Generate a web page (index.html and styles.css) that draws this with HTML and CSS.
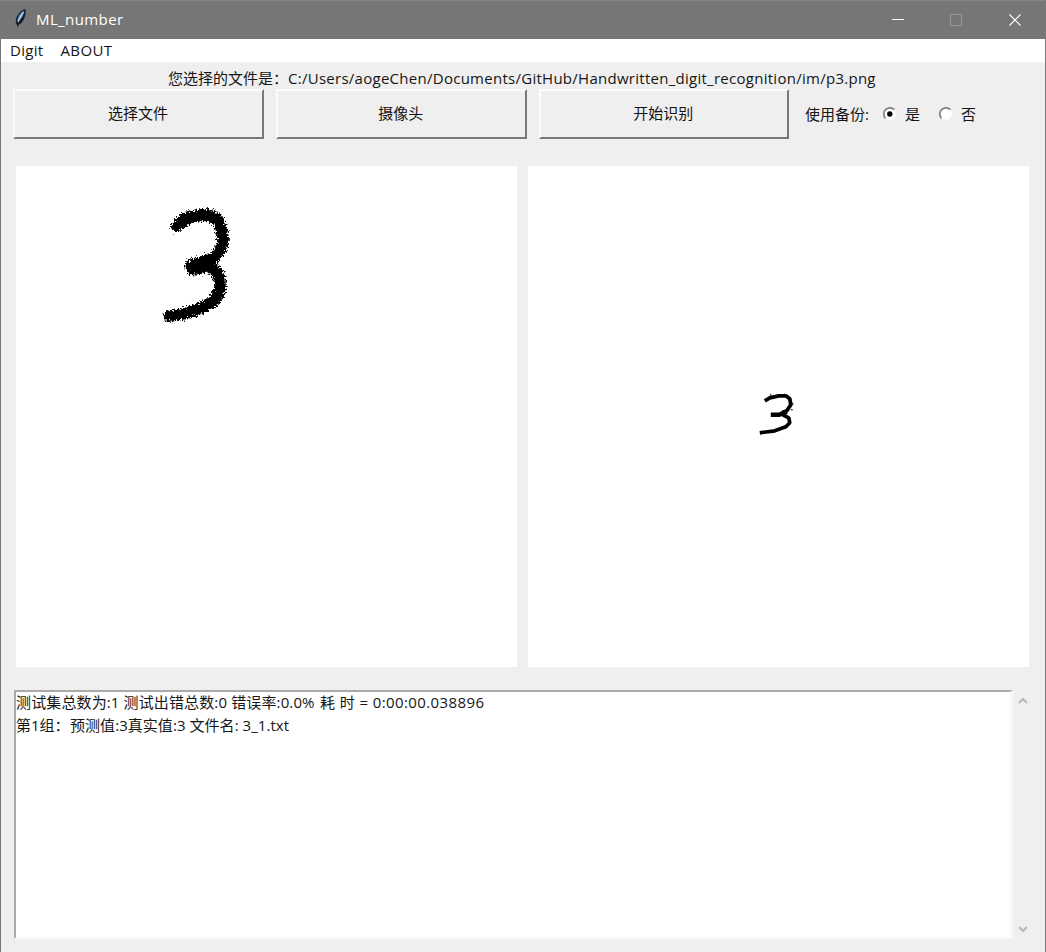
FILE: index.html
```
<!DOCTYPE html>
<html lang="zh-CN">
<head>
<meta charset="utf-8">
<title>ML_number</title>
<link rel="stylesheet" href="styles.css">
</head>
<body>
<div class="window">
  <header class="titlebar">
    <svg class="feather" width="14" height="22" viewBox="0 0 14 22">
      <path d="M11 1C7 2 3 7 2 11c-.6 3-.2 4 1 6l.5 3 1-3c4-2 6-6 6.700-10C12 4 12 2 11 1z" fill="#15202c"/>
      <path d="M10.500 2.500C7 4 3.500 8 3.300 13.500c3-1.500 5.500-4.500 6.300-7.500z" fill="#5f8fc4"/>
      <path d="M9.500 4C7 7 6 10 4 14" fill="none" stroke="#c3daf0" stroke-width="1.100"/>
    </svg>
    <span class="caption">ML_number</span>
    <svg class="controls" width="160" height="38" viewBox="0 0 160 38" fill="none">
      <path d="M6 18.500h12" stroke="#fff"/>
      <rect x="64.500" y="13.500" width="11" height="11" stroke="#999"/>
      <path d="M123.500 13.500l11 11m0-11l-11 11" stroke="#fff" stroke-width="1.200"/>
    </svg>
  </header>
  <nav class="menu"><span class="digit">Digit</span><span class="about">ABOUT</span></nav>
  <main class="content">
    <div class="path"><span class="prefix">您选择的文件是：</span><span class="file">C:/Users/aogeChen/Documents/GitHub/Handwritten_digit_recognition/im/p3.png</span></div>
    <div class="toolbar">
      <button class="btn">选择文件</button>
      <button class="btn">摄像头</button>
      <button class="btn">开始识别</button>
      <div class="backup">
        <span class="backup-label">使用备份:</span>
        <svg class="radio" width="14" height="14" viewBox="0 0 14 14"><circle cx="7" cy="7" r="6" fill="#fff"/><path d="M2.600 11.400A6 6 0 0 1 11.400 2.600" fill="none" stroke="#858585" stroke-width="1.700"/><circle cx="6.800" cy="7" r="2.700" fill="#000"/></svg>
        <span class="choice">是</span>
        <svg class="radio second" width="14" height="14" viewBox="0 0 14 14"><circle cx="7" cy="7" r="6" fill="#fff"/><path d="M2.600 11.400A6 6 0 0 1 11.400 2.600" fill="none" stroke="#858585" stroke-width="1.700"/></svg>
        <span class="choice">否</span>
      </div>
    </div>
    <div class="canvases">
      <svg class="canvas" width="501" height="501" viewBox="0 0 501 501">
        <defs><filter id="spray" x="-20%" y="-20%" width="140%" height="140%">
          <feTurbulence type="fractalNoise" baseFrequency=".6" numOctaves="2" seed="4"/>
          <feDisplacementMap in="SourceGraphic" scale="9" xChannelSelector="R" yChannelSelector="G"/>
        </filter></defs>
        <g filter="url(#spray)" fill="none" stroke="#000" stroke-linecap="round" stroke-linejoin="round">
          <path d="M161 60Q169 51 181 50Q196 46 203 57" stroke-width="12"/>
          <path d="M200 52Q213 74 202 87Q195 97 183 100" stroke-width="11.500"/>
          <path d="M178 101L192 97" stroke-width="17"/>
          <path d="M190 99Q205 104 204 120Q204 136 182 143Q170 149 153 150" stroke-width="11.500"/>
        </g>
      </svg>
      <svg class="canvas" width="501" height="501" viewBox="0 0 501 501">
        <g transform="translate(.8 .8)" fill="none" stroke="#000" stroke-linejoin="bevel">
          <path d="M236 234l5-3 9-2h7l4 3 1 6-4 6-5 2" stroke-width="3.800"/>
          <path d="M242 248h8l8-3" stroke-width="4.500"/>
          <path d="M254 248l6 3 1 5-4 4-11 4-15 2" stroke-width="3.700"/>
          <path d="M242 227v2M256 227v2M264 236v2M262 243h2" stroke-width="1"/>
        </g>
      </svg>
    </div>
    <div class="results">
      <div class="log">
        <div class="line"><span class="r1">测试集总数为:1 测试出错总数:0 错误率:0.0%</span><span class="r2">耗 时 = 0:00:00.038896</span></div>
        <div class="line"><span class="r3">第1组：</span><span class="r4">预测值:3真实值:3 文件名: 3_1.txt</span></div>
      </div>
      <div class="scroll">
        <svg width="12" height="9" viewBox="0 0 12 9"><path d="M2 7l4-4 4 4" fill="none" stroke="#b8b8b8" stroke-width="2.200"/></svg>
        <svg width="12" height="9" viewBox="0 0 12 9"><path d="M2 2l4 4 4-4" fill="none" stroke="#b8b8b8" stroke-width="2.200"/></svg>
      </div>
    </div>
  </main>
</div>
</body>
</html>
```
FILE: styles.css
```
* { box-sizing: border-box; }
body { margin: 0; font: 15px/20px "Open Sans", "Noto Sans CJK SC", sans-serif; color: #161616; }
.window { height: 952px; display: flex; flex-direction: column; background: #efefef; border: solid #777; border-width: 0 1px; overflow: hidden; white-space: nowrap; }
.titlebar { height: 39px; background: #767676; border-top: 1px solid #858585; display: flex; align-items: center; padding-left: 13px; color: #fff; }
.feather { margin-top: -3px; }
.caption { margin: -2px 0 0 8px; letter-spacing: .4px; }
.controls { margin-left: auto; margin-right: -1px; }
.menu { height: 23px; background: #fff; display: flex; align-items: center; padding: 0 0 1px 9px; gap: 17px; }
.digit { letter-spacing: .3px; }
.about { letter-spacing: .4px; }
.content { display: flex; flex-direction: column; }
.path { height: 27px; padding: 6px 0 0 167px; display: flex; }
.prefix { width: 120px; }
.file { letter-spacing: .27px; }
.toolbar { display: flex; padding-left: 12px; height: 50px; gap: 12px; }
.btn { width: 251px; height: 50px; padding: 0 1px 3px 0; background: #efefef; font: inherit; color: #111; border: solid; border-width: 2px; border-color: #fcfcfc #787878 #787878 #fcfcfc; }
.btn + .btn { width: 250.500px; }
.backup { display: flex; align-items: center; padding-left: 4px; }
.backup-label { width: 78px; }
.choice { margin-left: 8px; width: 15px; }
.second { margin-left: 19px; }
.canvases { display: flex; gap: 11px; padding: 27px 0 0 15px; }
.canvas { background: #fff; display: block; }
.results { display: flex; margin: 23px 0 0 13px; height: 249px; }
.log { width: 999px; background: #fff; border: solid; border-width: 2px 3px 2px 2px; border-color: #aaa #f8f8f8 #f8f8f8 #aaa; line-height: 21px; }
.line { display: flex; height: 23px; }
.r1 { width: 304px; letter-spacing: .13px; }
.r2 { letter-spacing: .4px; }
.r3 { width: 54px; }
.r4 { letter-spacing: .05px; }
.scroll { display: flex; flex-direction: column; justify-content: space-between; padding: 6px 0 5px 4px; }
```
